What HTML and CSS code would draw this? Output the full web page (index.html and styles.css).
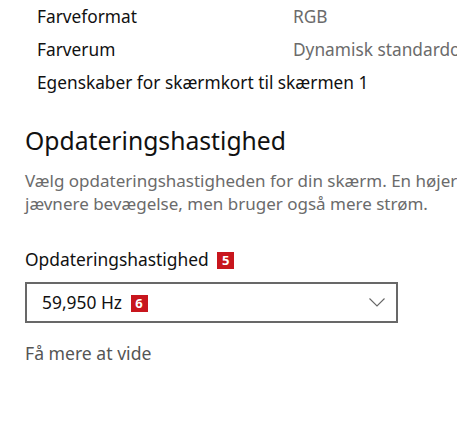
FILE: index.html
```html
<!DOCTYPE html>
<html lang="da">
<head>
  <meta charset="UTF-8">
  <meta name="viewport" content="width=device-width, initial-scale=1.0">
  <title>Skærm</title>
  <link rel="stylesheet" href="styles.css">
</head>

<body>
  <div class="page">
    <div class="info">
      <div class="infoRow">
        <span class="infoName">Farveformat</span>
        <span class="infoValue">RGB</span>
      </div>
      <div class="infoRow">
        <span class="infoName">Farverum</span>
        <span class="infoValue">Dynamisk standardområde (SDR)</span>
      </div>
      <div class="infoRow">
        <span class="infoName">Egenskaber for skærmkort til skærmen 1</span>
      </div>
    </div>

    <h2>Opdateringshastighed</h2>
    <p class="desc">Vælg opdateringshastigheden for din skærm. En højere opdateringshastighed giver<br>jævnere bevægelse, men bruger også mere strøm.</p>

    <label class="fieldLabel">Opdateringshastighed <span class="badge">5</span></label>
    <div class="select">
      <span class="selectText">59,950 Hz <span class="badge">6</span></span>
      <svg class="chevron" width="16" height="9" viewBox="0 0 16 9">
        <polyline points="0.5,0.5 8,8 15.5,0.5" fill="none" stroke="#666" stroke-width="1.1"/>
      </svg>
    </div>

    <a class="more" href="#">Få mere at vide</a>
  </div>
</body>
</html>
```

FILE: styles.css
```css
html, body {
  margin: 0;
  padding: 0;
  background: #ffffff;
  overflow: hidden;
}

body {
  font-family: "Noto Sans", "Open Sans", sans-serif;
  color: #111;
}

.page {
  padding-left: 25px;
  width: 800px;
}

.info {
  padding-left: 12px;
}

.infoRow {
  display: flex;
  font-size: 17.3px;
  line-height: 33px;
  white-space: nowrap;
}

.infoName {
  width: 256px;
  flex: none;
}

.infoValue {
  color: #6b6b6b;
}

h2 {
  margin: 24px 0 0;
  font-size: 24.7px;
  font-weight: normal;
  line-height: 36px;
  color: #111;
}

.desc {
  margin: 10px 0 0;
  font-size: 17px;
  line-height: 23px;
  color: #6b6b6b;
  white-space: nowrap;
}

.fieldLabel {
  display: block;
  margin-top: 32px;
  font-size: 17.4px;
  line-height: 24px;
}

.badge {
  display: inline-block;
  width: 17px;
  height: 17px;
  margin-left: 4px;
  background: #c8161d;
  color: #fff;
  font-size: 13px;
  font-weight: bold;
  line-height: 17px;
  text-align: center;
  vertical-align: 1px;
}

.select {
  display: flex;
  align-items: center;
  justify-content: space-between;
  box-sizing: border-box;
  width: 373px;
  height: 41px;
  margin-top: 11px;
  padding: 0 11px 0 15px;
  border: 2px solid #686868;
  font-size: 17.4px;
  line-height: 37px;
}

.chevron {
  display: block;
}

.more {
  display: block;
  margin-top: 18px;
  font-size: 17.6px;
  line-height: 24px;
  color: #555;
  text-decoration: none;
}
```
